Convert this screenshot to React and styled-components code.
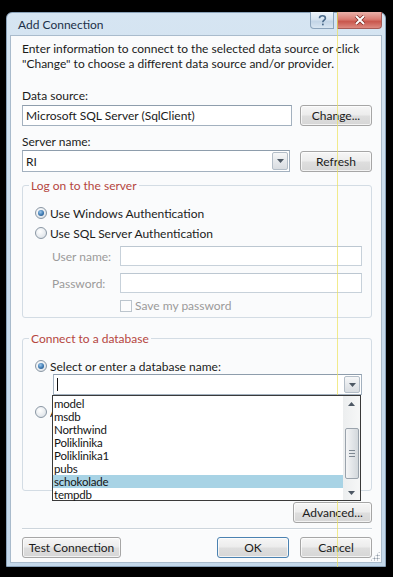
import React from "react";
import styled, { createGlobalStyle } from "styled-components";

const Global = createGlobalStyle`
  html, body {
    margin: 0;
    padding: 0;
    background: #000;
  }
  body {
    font-family: Lato, "Liberation Sans", sans-serif;
    font-size: 12px;
    color: #1b1b1b;
  }
`;

const Page = styled.div`
  position: relative;
  width: 393px;
  height: 577px;
  box-sizing: border-box;
  padding: 12px 0 0 6px;
  background: #000;
  overflow: hidden;
`;

const ScanLine = styled.div`
  position: absolute;
  left: 337px;
  top: 12px;
  width: 1px;
  height: 555px;
  background: rgba(236, 226, 92, 0.7);
  pointer-events: none;
`;

const Frame = styled.div`
  width: 380px;
  height: 555px;
  box-sizing: border-box;
  border: 1px solid #8aa2b9;
  border-radius: 6px 6px 0 0;
  background: linear-gradient(180deg, #d6e5f2 0%, #c9dcec 40%, #c4d8ea 100%);
  padding: 0 3px 3px;
  display: flex;
  flex-direction: column;
`;

const TitleBar = styled.div`
  height: 22px;
  flex: none;
  display: flex;
  align-items: flex-start;
`;

const Title = styled.div`
  margin: 4px 0 0 8px;
  flex: 1;
  line-height: 15px;
  color: #1d3149;
`;

const CaptionButton = styled.div`
  width: ${(p) => p.$w}px;
  height: 17px;
  margin-top: -1px;
  box-sizing: border-box;
  display: flex;
  align-items: center;
  justify-content: center;
  border: 1px solid ${(p) => (p.$close ? "#a65a55" : "#8ba3bb")};
  border-top: none;
  border-radius: ${(p) => (p.$close ? "0 0 4px 0" : "0 0 0 4px")};
  background: ${(p) =>
    p.$close
      ? "linear-gradient(180deg, #eab1a9 0%, #da7d73 45%, #c9574d 60%, #dd8a80 100%)"
      : "linear-gradient(180deg, #eef4fa 0%, #d7e4f0 45%, #c3d5e7 60%, #d9e6f2 100%)"};
  & + & {
    margin-left: 3px;
  }
`;

const Content = styled.div`
  flex: 1;
  background: #fafbfc;
  border: 1px solid #a9bbcc;
  padding: 0 9px 0 11px;
  display: flex;
  flex-direction: column;
  position: relative;
`;

const Intro = styled.p`
  margin: 0;
  padding-top: 5px;
  line-height: 15px;
`;

const Label = styled.div`
  margin-top: ${(p) => p.$top || 0}px;
  line-height: 15px;
  color: ${(p) => (p.$disabled ? "#9a9a9a" : "#1b1b1b")};
`;

const Row = styled.div`
  display: flex;
  align-items: center;
  gap: ${(p) => p.$gap ?? 8}px;
  margin-top: ${(p) => p.$top || 0}px;
`;

const TextBox = styled.div`
  flex: 1;
  height: ${(p) => p.$h || 21}px;
  box-sizing: border-box;
  border: 1px solid ${(p) => (p.$disabled ? "#c7d1da" : "#a3b1bf")};
  border-top-color: ${(p) => (p.$disabled ? "#bcc7d1" : "#8e9dac")};
  background: #fff;
  display: flex;
  align-items: center;
  padding-left: 3px;
  position: relative;
`;

const ArrowButton = styled.div`
  position: absolute;
  right: 1px;
  top: 1px;
  bottom: 1px;
  width: 16px;
  box-sizing: border-box;
  border: 1px solid #b3bdc7;
  border-radius: 2px;
  background: linear-gradient(180deg, #f6f7f8 0%, #e6e9ec 50%, #d9dde1 100%);
  display: flex;
  align-items: center;
  justify-content: center;
`;

const Button = styled.div`
  width: ${(p) => p.$w}px;
  height: 21px;
  flex: none;
  box-sizing: border-box;
  border: 1px solid ${(p) => (p.$default ? "#4b82b1" : "#a6a6a6")};
  border-radius: 3px;
  background: linear-gradient(180deg, #f6f6f6 0%, #ececec 48%, #dedede 52%, #d6d6d6 100%);
  box-shadow: inset 0 0 0 1px rgba(255, 255, 255, 0.7);
  display: flex;
  align-items: center;
  justify-content: center;
  margin-left: ${(p) => p.$ml || 0}px;
  color: #1b1b1b;
  line-height: 15px;
`;

const Group = styled.fieldset`
  margin: ${(p) => p.$top}px 0 0;
  padding: 0 9px ${(p) => p.$bottom}px 12px;
  border: 1px solid #d3dce4;
  border-radius: 3px;
  min-width: 0;
`;

const Legend = styled.legend`
  margin-left: -6px;
  padding: 0 2px;
  line-height: 15px;
  color: #b5463f;
`;

const OptionRow = styled.div`
  display: flex;
  align-items: center;
  gap: 3px;
  height: ${(p) => p.$h || 20}px;
  margin-top: ${(p) => p.$top || 0}px;
`;

const Radio = styled.span`
  width: 12px;
  height: 12px;
  flex: none;
  box-sizing: border-box;
  border-radius: 50%;
  border: 1px solid #8a97a4;
  background: radial-gradient(circle at 40% 35%, #ffffff 0%, #e6eaee 60%, #cfd6dd 100%);
  position: relative;
  &::after {
    content: "";
    display: ${(p) => (p.$checked ? "block" : "none")};
    position: absolute;
    left: 2px;
    top: 2px;
    width: 6px;
    height: 6px;
    border-radius: 50%;
    background: radial-gradient(circle at 40% 35%, #9cc7ec 0%, #3c78b0 55%, #1c4a7a 100%);
  }
`;

const PeekText = styled.span`
  width: 3px;
  overflow: hidden;
  white-space: nowrap;
`;

const CredLabel = styled.div`
  width: 68px;
  flex: none;
  padding-left: 17px;
  color: #9a9a9a;
  line-height: 15px;
`;

const CheckBox = styled.span`
  width: 12px;
  height: 12px;
  box-sizing: border-box;
  border: 1px solid #bcc5cd;
  background: #fcfcfc;
  margin-left: 85px;
`;

const ComboWrap = styled.div`
  position: relative;
  margin-left: 18px;
`;

const Caret = styled.span`
  width: 1px;
  height: 13px;
  background: #111;
`;

const DropList = styled.div`
  position: absolute;
  left: -1px;
  top: 21px;
  width: 309px;
  height: 106px;
  box-sizing: border-box;
  border: 1px solid #3a3a3a;
  background: #fff;
  display: flex;
  z-index: 2;
`;

const Items = styled.div`
  flex: 1;
  display: flex;
  flex-direction: column;
  padding-top: 1px;
`;

const Item = styled.div`
  height: 13px;
  line-height: 13px;
  padding-left: 1px;
  font-size: 11.5px;
  letter-spacing: -0.2px;
  color: #141414;
  background: ${(p) => (p.$selected ? "#a8d3e5" : "transparent")};
`;

const ScrollBar = styled.div`
  width: 17px;
  display: flex;
  flex-direction: column;
  align-items: center;
  background: linear-gradient(90deg, #eceeef, #f6f7f7);
`;

const ScrollArrow = styled.div`
  height: 15px;
  width: 17px;
  display: flex;
  align-items: center;
  justify-content: center;
`;

const Thumb = styled.div`
  margin-top: 17px;
  width: 14px;
  height: 51px;
  box-sizing: border-box;
  border: 1px solid #9aa3ac;
  border-radius: 2px;
  background: linear-gradient(90deg, #f4f5f6 0%, #e3e6e9 50%, #d3d8dc 100%);
  display: flex;
  flex-direction: column;
  align-items: center;
  justify-content: center;
  gap: 2px;
`;

const Grip = styled.span`
  width: 6px;
  height: 1px;
  background: #7d8892;
`;

const Spacer = styled.div`
  flex: 1;
`;

const Footer = styled.div`
  display: flex;
  justify-content: flex-end;
  margin-top: 11px;
`;

const Separator = styled.div`
  margin-top: 5px;
  height: 1px;
  background: #cdd5dc;
  border-bottom: 1px solid #ffffff;
`;

const BottomRow = styled.div`
  display: flex;
  align-items: center;
  margin-top: 7px;
`;

const Gripper = styled.div`
  position: absolute;
  right: 1px;
  bottom: 1px;
  width: 10px;
  height: 10px;
  background-image: radial-gradient(circle, #8e9aa6 0.8px, transparent 1.2px);
  background-size: 3px 3px;
  clip-path: polygon(100% 0, 100% 100%, 0 100%);
`;

const Triangle = ({ up }) => (
  <svg width="7" height="4" viewBox="0 0 7 4">
    <path d={up ? "M0 4 L3.5 0 L7 4 Z" : "M0 0 L7 0 L3.5 4 Z"} fill="#4d5864" />
  </svg>
);

const databases = [
  "model",
  "msdb",
  "Northwind",
  "Poliklinika",
  "Poliklinika1",
  "pubs",
  "schokolade",
  "tempdb",
];

const App = () => (
  <Page>
    <Global />
    <Frame>
      <TitleBar>
        <Title>Add Connection</Title>
        <CaptionButton $w={24}>
          <svg width="9" height="11" viewBox="0 0 9 11">
            <path
              d="M1.5 3.2 C1.5 1.4 2.8 0.8 4.4 0.8 C6.2 0.8 7.4 1.8 7.4 3.2 C7.4 5 4.8 5.2 4.8 7.2"
              fill="none"
              stroke="#4a6a8a"
              strokeWidth="1.6"
            />
            <rect x="4" y="8.6" width="1.7" height="1.7" fill="#4a6a8a" />
          </svg>
        </CaptionButton>
        <CaptionButton $w={45} $close>
          <svg width="12" height="10" viewBox="0 0 12 10">
            <path d="M2 1 L10 9 M10 1 L2 9" stroke="#7a2a24" strokeWidth="3.4" />
            <path d="M2 1 L10 9 M10 1 L2 9" stroke="#ffffff" strokeWidth="2" />
          </svg>
        </CaptionButton>
      </TitleBar>
      <Content>
        <Intro>
          Enter information to connect to the selected data source or click
          "Change" to choose a different data source and/or provider.
        </Intro>

        <Label $top={17}>Data source:</Label>
        <Row $top={2}>
          <TextBox>Microsoft SQL Server (SqlClient)</TextBox>
          <Button $w={72}>Change...</Button>
        </Row>

        <Label $top={8}>Server name:</Label>
        <Row $top={1} $gap={10}>
          <TextBox $h={22}>
            RI
            <ArrowButton>
              <Triangle />
            </ArrowButton>
          </TextBox>
          <Button $w={72}>Refresh</Button>
        </Row>

        <Group $top={6} $bottom={5}>
          <Legend>Log on to the server</Legend>
          <OptionRow $top={10}>
            <Radio $checked />
            Use Windows Authentication
          </OptionRow>
          <OptionRow>
            <Radio />
            Use SQL Server Authentication
          </OptionRow>
          <Row $top={3} $gap={0}>
            <CredLabel>User name:</CredLabel>
            <TextBox $h={20} $disabled />
          </Row>
          <Row $top={7} $gap={0}>
            <CredLabel>Password:</CredLabel>
            <TextBox $h={20} $disabled />
          </Row>
          <OptionRow $top={6} $h={13}>
            <CheckBox />
            <Label $disabled>Save my password</Label>
          </OptionRow>
        </Group>

        <Group $top={13} $bottom={70}>
          <Legend>Connect to a database</Legend>
          <OptionRow $top={12} $h={16}>
            <Radio $checked />
            Select or enter a database name:
          </OptionRow>
          <ComboWrap>
            <TextBox $h={21}>
              <Caret />
              <ArrowButton>
                <Triangle />
              </ArrowButton>
            </TextBox>
            <DropList>
              <Items>
                {databases.map((db) => (
                  <Item key={db} $selected={db === "schokolade"}>
                    {db}
                  </Item>
                ))}
              </Items>
              <ScrollBar>
                <ScrollArrow>
                  <Triangle up />
                </ScrollArrow>
                <Thumb>
                  <Grip />
                  <Grip />
                  <Grip />
                </Thumb>
                <Spacer />
                <ScrollArrow>
                  <Triangle />
                </ScrollArrow>
              </ScrollBar>
            </DropList>
          </ComboWrap>
          <OptionRow $top={9} $h={16}>
            <Radio />
            <PeekText>Attach a database file:</PeekText>
          </OptionRow>
        </Group>

        <Footer>
          <Button $w={79}>Advanced...</Button>
        </Footer>
        <Separator />
        <BottomRow>
          <Button $w={99}>Test Connection</Button>
          <Spacer />
          <Button $w={72} $default>
            OK
          </Button>
          <Button $w={72} $ml={11}>
            Cancel
          </Button>
        </BottomRow>
        <Gripper />
      </Content>
    </Frame>
    <ScanLine />
  </Page>
);

export default App;
